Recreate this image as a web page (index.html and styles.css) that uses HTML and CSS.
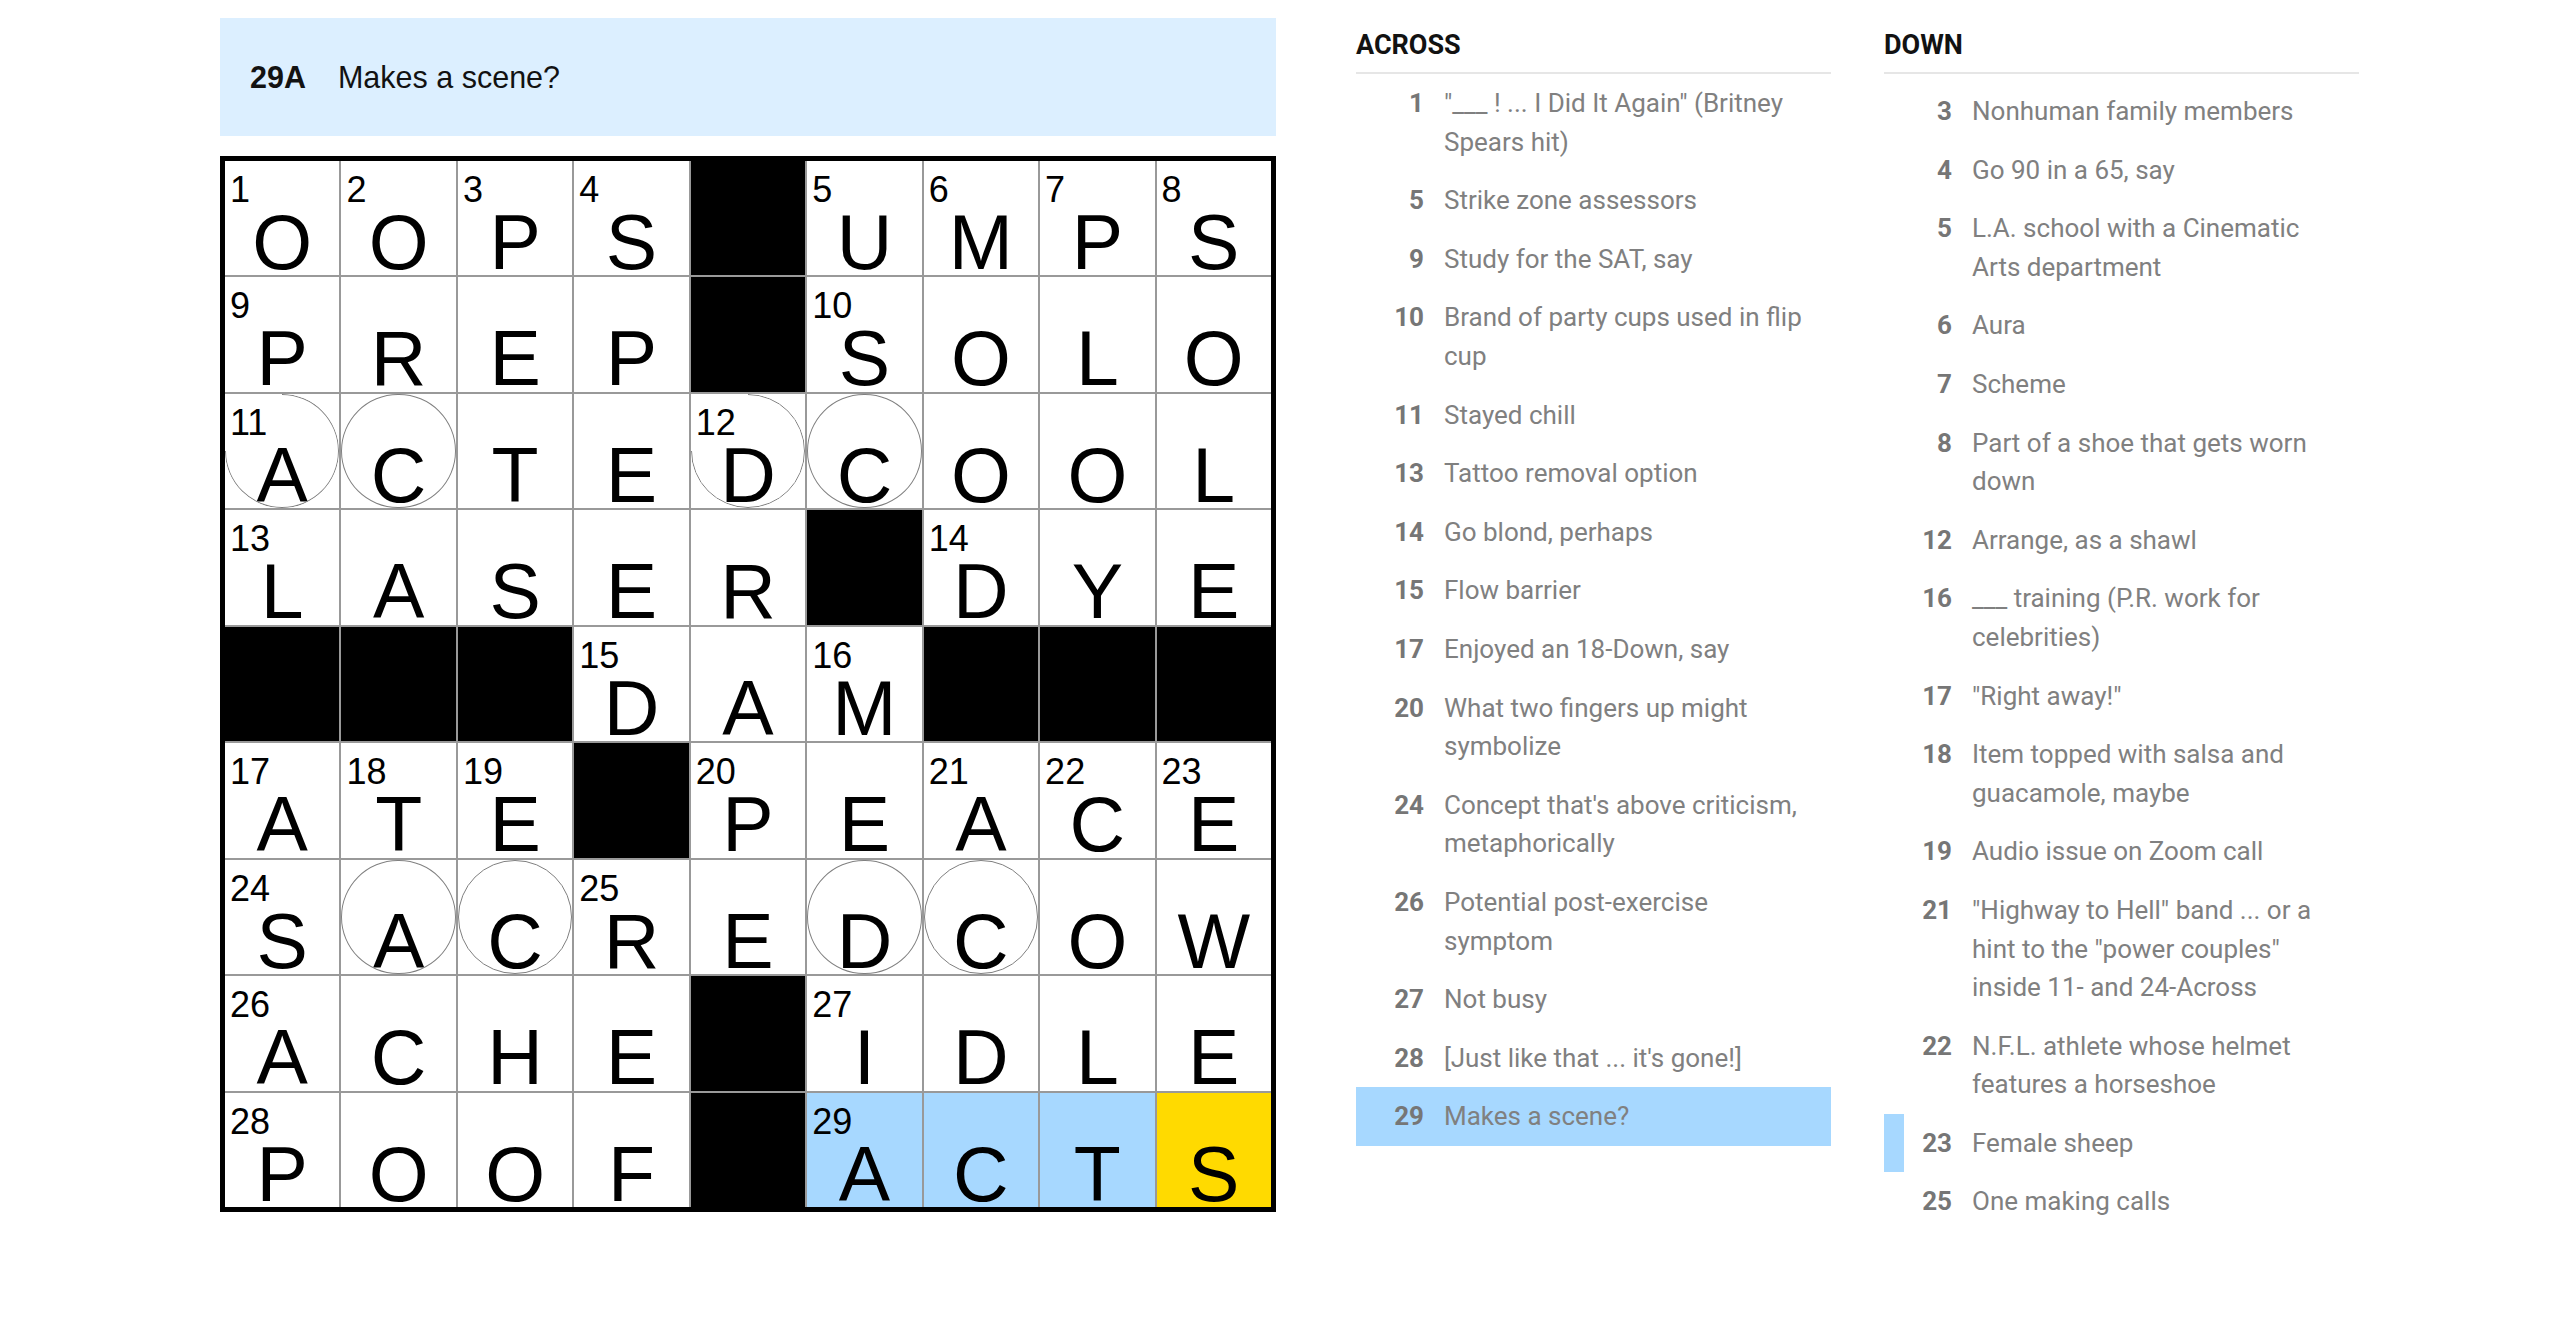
FILE: index.html
```html
<!DOCTYPE html>
<html lang="en">
<head>
    <meta charset="UTF-8">
    <meta name="viewport" content="width=device-width, initial-scale=1.0">
    <title>Crossword</title>
    <link rel="stylesheet" href="styles.css">
</head>
<body>
    <div class="app">
        <div class="puzzle">
            <div class="clue-bar">
                <span class="clue-bar-label">29A</span>
                <span class="clue-bar-text">Makes a scene?</span>
            </div>

            <div class="board">
                <!-- row 1 -->
                <div class="cell"><span class="num">1</span>O</div>
                <div class="cell"><span class="num">2</span>O</div>
                <div class="cell"><span class="num">3</span>P</div>
                <div class="cell"><span class="num">4</span>S</div>
                <div class="cell block"></div>
                <div class="cell"><span class="num">5</span>U</div>
                <div class="cell"><span class="num">6</span>M</div>
                <div class="cell"><span class="num">7</span>P</div>
                <div class="cell"><span class="num">8</span>S</div>
                <!-- row 2 -->
                <div class="cell"><span class="num">9</span>P</div>
                <div class="cell">R</div>
                <div class="cell">E</div>
                <div class="cell">P</div>
                <div class="cell block"></div>
                <div class="cell"><span class="num">10</span>S</div>
                <div class="cell">O</div>
                <div class="cell">L</div>
                <div class="cell">O</div>
                <!-- row 3 -->
                <div class="cell circled circled-cut"><span class="num">11</span>A</div>
                <div class="cell circled">C</div>
                <div class="cell">T</div>
                <div class="cell">E</div>
                <div class="cell circled circled-cut"><span class="num">12</span>D</div>
                <div class="cell circled">C</div>
                <div class="cell">O</div>
                <div class="cell">O</div>
                <div class="cell">L</div>
                <!-- row 4 -->
                <div class="cell"><span class="num">13</span>L</div>
                <div class="cell">A</div>
                <div class="cell">S</div>
                <div class="cell">E</div>
                <div class="cell">R</div>
                <div class="cell block"></div>
                <div class="cell"><span class="num">14</span>D</div>
                <div class="cell">Y</div>
                <div class="cell">E</div>
                <!-- row 5 -->
                <div class="cell block"></div>
                <div class="cell block"></div>
                <div class="cell block"></div>
                <div class="cell"><span class="num">15</span>D</div>
                <div class="cell">A</div>
                <div class="cell"><span class="num">16</span>M</div>
                <div class="cell block"></div>
                <div class="cell block"></div>
                <div class="cell block"></div>
                <!-- row 6 -->
                <div class="cell"><span class="num">17</span>A</div>
                <div class="cell"><span class="num">18</span>T</div>
                <div class="cell"><span class="num">19</span>E</div>
                <div class="cell block"></div>
                <div class="cell"><span class="num">20</span>P</div>
                <div class="cell">E</div>
                <div class="cell"><span class="num">21</span>A</div>
                <div class="cell"><span class="num">22</span>C</div>
                <div class="cell"><span class="num">23</span>E</div>
                <!-- row 7 -->
                <div class="cell"><span class="num">24</span>S</div>
                <div class="cell circled">A</div>
                <div class="cell circled">C</div>
                <div class="cell"><span class="num">25</span>R</div>
                <div class="cell">E</div>
                <div class="cell circled">D</div>
                <div class="cell circled">C</div>
                <div class="cell">O</div>
                <div class="cell">W</div>
                <!-- row 8 -->
                <div class="cell"><span class="num">26</span>A</div>
                <div class="cell">C</div>
                <div class="cell">H</div>
                <div class="cell">E</div>
                <div class="cell block"></div>
                <div class="cell"><span class="num">27</span>I</div>
                <div class="cell">D</div>
                <div class="cell">L</div>
                <div class="cell">E</div>
                <!-- row 9 -->
                <div class="cell"><span class="num">28</span>P</div>
                <div class="cell">O</div>
                <div class="cell">O</div>
                <div class="cell">F</div>
                <div class="cell block"></div>
                <div class="cell in-word"><span class="num">29</span>A</div>
                <div class="cell in-word">C</div>
                <div class="cell in-word">T</div>
                <div class="cell selected">S</div>
            </div>
        </div>

        <div class="clue-lists">
            <section class="clue-list">
                <h3 class="clue-list-title">Across</h3>
                <ol class="clues">
                    <li class="clue"><span class="clue-num">1</span><span class="clue-text">"___ ! ... I Did It Again" (Britney Spears hit)</span></li>
                    <li class="clue"><span class="clue-num">5</span><span class="clue-text">Strike zone assessors</span></li>
                    <li class="clue"><span class="clue-num">9</span><span class="clue-text">Study for the SAT, say</span></li>
                    <li class="clue"><span class="clue-num">10</span><span class="clue-text">Brand of party cups used in flip cup</span></li>
                    <li class="clue"><span class="clue-num">11</span><span class="clue-text">Stayed chill</span></li>
                    <li class="clue"><span class="clue-num">13</span><span class="clue-text">Tattoo removal option</span></li>
                    <li class="clue"><span class="clue-num">14</span><span class="clue-text">Go blond, perhaps</span></li>
                    <li class="clue"><span class="clue-num">15</span><span class="clue-text">Flow barrier</span></li>
                    <li class="clue"><span class="clue-num">17</span><span class="clue-text">Enjoyed an 18-Down, say</span></li>
                    <li class="clue"><span class="clue-num">20</span><span class="clue-text">What two fingers up might symbolize</span></li>
                    <li class="clue"><span class="clue-num">24</span><span class="clue-text">Concept that's above criticism, metaphorically</span></li>
                    <li class="clue"><span class="clue-num">26</span><span class="clue-text">Potential post-exercise symptom</span></li>
                    <li class="clue"><span class="clue-num">27</span><span class="clue-text">Not busy</span></li>
                    <li class="clue"><span class="clue-num">28</span><span class="clue-text">[Just like that ... it's gone!]</span></li>
                    <li class="clue selected"><span class="clue-num">29</span><span class="clue-text">Makes a scene?</span></li>
                </ol>
            </section>

            <section class="clue-list">
                <h3 class="clue-list-title">Down</h3>
                <ol class="clues clues-scrolled">
                    <li class="clue"><span class="clue-num">3</span><span class="clue-text">Nonhuman family members</span></li>
                    <li class="clue"><span class="clue-num">4</span><span class="clue-text">Go 90 in a 65, say</span></li>
                    <li class="clue"><span class="clue-num">5</span><span class="clue-text">L.A. school with a Cinematic Arts department</span></li>
                    <li class="clue"><span class="clue-num">6</span><span class="clue-text">Aura</span></li>
                    <li class="clue"><span class="clue-num">7</span><span class="clue-text">Scheme</span></li>
                    <li class="clue"><span class="clue-num">8</span><span class="clue-text">Part of a shoe that gets worn down</span></li>
                    <li class="clue"><span class="clue-num">12</span><span class="clue-text">Arrange, as a shawl</span></li>
                    <li class="clue"><span class="clue-num">16</span><span class="clue-text">___ training (P.R. work for celebrities)</span></li>
                    <li class="clue"><span class="clue-num">17</span><span class="clue-text">"Right away!"</span></li>
                    <li class="clue"><span class="clue-num">18</span><span class="clue-text">Item topped with salsa and guacamole, maybe</span></li>
                    <li class="clue"><span class="clue-num">19</span><span class="clue-text">Audio issue on Zoom call</span></li>
                    <li class="clue"><span class="clue-num">21</span><span class="clue-text">"Highway to Hell" band ... or a hint to the "power couples" inside 11- and 24-Across</span></li>
                    <li class="clue"><span class="clue-num">22</span><span class="clue-text">N.F.L. athlete whose helmet features a horseshoe</span></li>
                    <li class="clue crossing"><span class="clue-num">23</span><span class="clue-text">Female sheep</span></li>
                    <li class="clue"><span class="clue-num">25</span><span class="clue-text">One making calls</span></li>
                </ol>
            </section>
        </div>
    </div>
</body>
</html>
```

FILE: styles.css
```css
body {
    margin: 0;
    background-color: #fff;
    font-family: "Liberation Sans", Arial, sans-serif;
    color: #121212;
}
.app {
    display: flex;
    align-items: flex-start;
    padding: 18px 0 0 220px;
}
.puzzle {
    width: 1056px;
    flex-shrink: 0;
}

/* current clue banner above the board */
.clue-bar {
    display: flex;
    align-items: center;
    height: 118px;
    padding-left: 30px;
    background-color: #dcefff;
    font-size: 30.5px;
    color: #121212;
}
.clue-bar-label {
    font-weight: bold;
    margin-right: 32px;
}

/* board */
.board {
    box-sizing: border-box;
    width: 1056px;
    height: 1056px;
    margin-top: 20px;
    border: 5px solid #000;
    display: grid;
    grid-template-columns: repeat(9, minmax(0, 1fr));
    grid-template-rows: repeat(9, minmax(0, 1fr));
    gap: 2px;
    background-color: #999;
}
.cell {
    position: relative;
    box-sizing: border-box;
    padding-top: 51px;
    background-color: #fff;
    font-size: 77px;
    line-height: 60px;
    text-align: center;
    color: #000;
}
.cell.block {
    background-color: #000;
}
.cell.in-word {
    background-color: #a7d8ff;
}
.cell.selected {
    background-color: #ffda00;
}
.num {
    position: absolute;
    top: 11px;
    left: 5px;
    font-size: 36px;
    line-height: 36px;
    z-index: 1;
}
.cell.circled::after {
    content: "";
    position: absolute;
    top: 0;
    left: 0;
    right: 0;
    bottom: 0;
    border: 1.5px solid #808080;
    border-radius: 50%;
}
/* numbered circles lose the arc behind the number */
.cell.circled-cut::after {
    -webkit-mask-image: conic-gradient(#000 0deg 270deg, transparent 270deg);
    mask-image: conic-gradient(#000 0deg 270deg, transparent 270deg);
}

/* clue lists */
.clue-lists {
    display: flex;
    gap: 53px;
    margin-left: 80px;
}
.clue-list {
    width: 475px;
    font-family: Roboto, "Liberation Sans", Arial, sans-serif;
}
.clue-list-title {
    margin: 10px 0 0;
    padding-bottom: 10px;
    border-bottom: 2px solid #e6e6e6;
    font-size: 27px;
    line-height: 34px;
    font-weight: bold;
    text-transform: uppercase;
    color: #121212;
}
.clues {
    list-style: none;
    margin: 0;
    padding: 0;
}
.clues-scrolled {
    padding-top: 8px;
}
.clue {
    display: flex;
    padding: 10px 16px 10px 0;
    font-size: 26px;
    line-height: 38.6px;
    color: #808080;
}
.clue-num {
    flex-shrink: 0;
    width: 68px;
    margin-right: 20px;
    text-align: right;
    font-weight: bold;
    color: #767676;
}
.clue-text {
    flex: 1;
}
.clue.selected {
    background-color: #a7d8ff;
}
.clue.crossing {
    box-shadow: inset 20px 0 0 #a7d8ff;
}
```
